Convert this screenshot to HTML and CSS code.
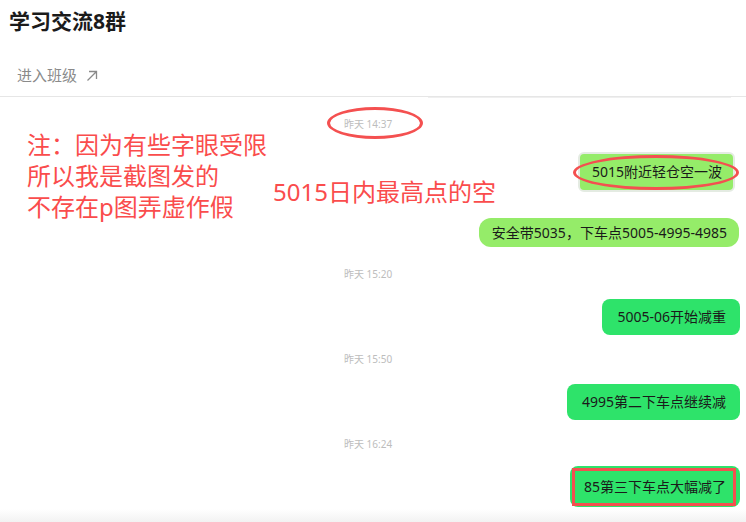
FILE: index.html
```html
<!DOCTYPE html>
<html lang="zh-CN">

<head>
    <meta charset="UTF-8">
    <meta name="viewport" content="width=device-width, initial-scale=1.0">
    <title>学习交流8群</title>
    <link rel="stylesheet" href="styles.css">
</head>

<body>
    <header class="header">
        <h1 class="title">学习交流8群</h1>
        <a class="enter-link" href="#">进入班级
            <svg class="arrow" width="12" height="12" viewBox="0 0 12 12">
                <path d="M1.5 10.5 L10.5 1.5 M3 1.5 H10.5 V9" fill="none" stroke="#8a8a8a" stroke-width="1.3" />
            </svg>
        </a>
    </header>

    <main class="chat">
        <div class="paste-edge"></div>

        <p class="time">昨天 14:37</p>
        <div class="bubble bubble-light bubble-framed">5015附近轻仓空一波</div>
        <div class="bubble bubble-light bubble-pill">安全带5035，下车点5005-4995-4985</div>

        <p class="time">昨天 15:20</p>
        <div class="bubble bubble-green">5005-06开始减重</div>

        <p class="time">昨天 15:50</p>
        <div class="bubble bubble-green">4995第二下车点继续减</div>

        <p class="time">昨天 16:24</p>
        <div class="bubble bubble-green bubble-last">85第三下车点大幅减了</div>
    </main>

    <!-- red annotations drawn over the screenshot -->
    <p class="note note-left">注：因为有些字眼受限<br>所以我是截图发的<br>不存在p图弄虚作假</p>
    <p class="note note-mid">5015日内最高点的空</p>
    <div class="mark mark-time"></div>
    <div class="mark mark-first"></div>
    <div class="mark mark-box"></div>

    <div class="bottom-fade"></div>
</body>

</html>
```

FILE: styles.css
```css
/* General Body Styling */

body {
    margin: 0;
    width: 746px;
    height: 522px;
    overflow: hidden;
    position: relative;
    background: #ffffff;
    font-family: "Noto Sans", "Noto Sans CJK SC", sans-serif;
    color: #1a1a1a;
}
/* Header */

.header {
    border-bottom: 1px solid #e6e6e6;
    padding-bottom: 10px;
}

.title {
    margin: 0;
    padding: 7px 0 0 9px;
    font-size: 21px;
    line-height: 28px;
    font-weight: bold;
    color: #1b1b1b;
}

.enter-link {
    display: flex;
    align-items: center;
    gap: 9px;
    margin-top: 29px;
    padding-left: 17px;
    font-size: 15px;
    line-height: 22px;
    color: #8a8a8a;
    text-decoration: none;
}

.arrow {
    margin-top: 1px;
}
/* Chat Area */

.chat {
    display: flex;
    flex-direction: column;
    align-items: flex-end;
}

.paste-edge {
    align-self: flex-start;
    margin-left: 428px;
    width: 303px;
    border-top: 1px solid #efefef;
}

.time {
    align-self: stretch;
    margin: 0;
    padding-left: 344px;
    font-size: 10px;
    line-height: 14px;
    color: #bdbdbd;
}

.paste-edge + .time {
    margin-top: 19px;
}

.bubble {
    margin-right: 6px;
    padding: 8px 14px 8px 15px;
    font-size: 14px;
    line-height: 20px;
    border-radius: 8px;
    white-space: nowrap;
}

.time + .bubble {
    margin-top: 18px;
}

.bubble + .time {
    margin-top: 17px;
}

.bubble-light {
    background: #95ec69;
}

.bubble-framed {
    margin-top: 21px !important;
    margin-right: 11px;
    padding: 8px 11px 8px 12px;
    border: 2px solid #e4ebe2;
    border-radius: 6px;
}

.bubble-pill {
    margin-top: 26px;
    margin-right: 7px;
    padding: 4px 12px 4px 13px;
    line-height: 21px;
    border-radius: 12px;
}

.bubble-pill + .time {
    margin-top: 20px;
}

.bubble-green {
    background: #2ee36a;
}

.bubble-last {
    margin-top: 15px !important;
    padding: 10px 14px;
    line-height: 21px;
}
/* Annotations */

.note {
    position: absolute;
    margin: 0;
    font-family: "Noto Sans", "Noto Sans CJK SC", sans-serif;
    font-size: 24px;
    line-height: 31px;
    color: #fa4c4c;
}

.note-left {
    left: 27px;
    top: 129px;
}

.note-mid {
    left: 273px;
    top: 176px;
}

.mark {
    position: absolute;
    box-sizing: border-box;
    border: 3px solid #f45050;
}

.mark-time {
    left: 327px;
    top: 107px;
    width: 96px;
    height: 32px;
    border-radius: 50%;
}

.mark-first {
    left: 573px;
    top: 155px;
    width: 166px;
    height: 35px;
    border-radius: 50%;
}

.mark-box {
    left: 572px;
    top: 468px;
    width: 164px;
    height: 38px;
    border-radius: 0;
}
/* Bottom Fade */

.bottom-fade {
    position: absolute;
    left: 0;
    bottom: 0;
    width: 100%;
    height: 13px;
    background: linear-gradient(#ffffff, #f2f2f2);
}
```
